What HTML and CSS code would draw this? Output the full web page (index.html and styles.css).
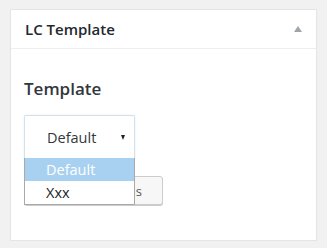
FILE: index.html
```html
<!DOCTYPE html>
<html>
<head>
<meta charset="utf-8">
<link rel="stylesheet" href="styles.css">
</head>
<body>
<div class="page">
  <div class="postbox">
    <div class="hndle">
      <span class="title">LC Template</span>
      <span class="toggle"></span>
    </div>
    <div class="inside">
      <h3 class="label">Template</h3>
      <div class="select-wrap">
        <div class="select">
          <span class="select-value">Default</span>
          <span class="select-arrow"></span>
        </div>
        <ul class="options">
          <li class="option selected">Default</li>
          <li class="option">Xxx</li>
        </ul>
      </div>
      <button class="button">Save Options</button>
    </div>
  </div>
</div>
</body>
</html>
```
FILE: styles.css
```css
html, body {
  margin: 0;
  padding: 0;
}
body {
  background: #f1f1f1;
  font-family: "Open Sans", "Liberation Sans", sans-serif;
  color: #444;
}
.page {
  padding: 9px 10px 0 10px;
}
.postbox {
  width: 307px;
  box-sizing: border-box;
  background: #fff;
  border: 1px solid #e5e5e5;
  box-shadow: 0 1px 1px rgba(0,0,0,0.04);
}
.hndle {
  height: 39px;
  box-sizing: border-box;
  border-bottom: 1px solid #eee;
  display: flex;
  align-items: center;
  justify-content: space-between;
  padding: 0 14px 0 14px;
}
.title {
  font-size: 15px;
  font-weight: 600;
  color: #23282d;
}
.toggle {
  width: 0;
  height: 0;
  border-left: 4.5px solid transparent;
  border-right: 4.5px solid transparent;
  border-bottom: 6px solid #a0a5aa;
  margin-right: 0;
}
.inside {
  padding: 28px 13px 35px 13px;
}
.label {
  margin: 0;
  font-size: 17px;
  font-weight: 600;
  color: #32373c;
  line-height: 24px;
}
.select-wrap {
  position: relative;
  margin-top: 14px;
  width: 111px;
}
.select {
  height: 44px;
  box-sizing: border-box;
  border: 1px solid #d4e0ea;
  border-bottom: none;
  border-radius: 2px 2px 0 0;
  background: #fff;
  display: flex;
  align-items: center;
  justify-content: space-between;
  padding: 0 9px 0 22px;
  box-shadow: 0 0 2px rgba(30,140,190,0.15);
}
.select-value {
  font-size: 14.5px;
  color: #32373c;
}
.select-arrow {
  width: 0;
  height: 0;
  border-left: 2.5px solid transparent;
  border-right: 2.5px solid transparent;
  border-top: 5px solid #222;
  margin-top: -1px;
}
.options {
  position: absolute;
  left: 0;
  top: 43px;
  width: 111px;
  box-sizing: border-box;
  margin: 0;
  padding: 0;
  list-style: none;
  background: #fff;
  border: 1px solid #a9a9a9;
  border-top: none;
  z-index: 2;
}
.option {
  height: 23px;
  line-height: 23px;
  padding-left: 21px;
  font-size: 14.5px;
  color: #222;
}
.option.selected {
  background: #a8d1f1;
  color: #fff;
}
.button {
  display: block;
  margin-top: 17px;
  width: 139px;
  height: 29px;
  box-sizing: border-box;
  border: 1px solid #ccc;
  border-radius: 3px;
  background: #f7f7f7;
  box-shadow: 0 1px 0 #ccc;
  font-family: "Open Sans", "Liberation Sans", sans-serif;
  font-size: 13px;
  color: #555;
  padding: 0 20px 0 0;
  text-align: right;
}
```
